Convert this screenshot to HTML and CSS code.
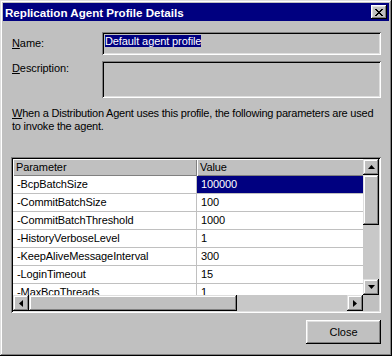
FILE: index.html
```html
<!DOCTYPE html>
<html lang="en">
  <head>
    <meta charset="UTF-8" />
    <title>Replication Agent Profile Details</title>
    <link rel="stylesheet" href="styles.css">
  </head>
  <body>
    <div class="window">
      <!-- Barra de titulo -->
      <div class="titlebar">
        <span class="title">Replication Agent Profile Details</span>
        <span class="title-close">
          <svg width="8" height="7" viewBox="0 0 8 7" shape-rendering="crispEdges">
            <path d="M0 0h2v1H0zM6 0h2v1H6zM1 1h2v1H1zM5 1h2v1H5zM2 2h4v1H2zM3 3h2v1H3zM2 4h4v1H2zM1 5h2v1H1zM5 5h2v1H5zM0 6h2v1H0zM6 6h2v1H6z" fill="#000"/>
          </svg>
        </span>
      </div>

      <div class="content">
        <div class="field">
          <label class="field-label"><u>N</u>ame:</label>
          <div class="textbox"><span class="selected">Default agent profile</span></div>
        </div>
        <div class="field field-desc">
          <label class="field-label"><u>D</u>escription:</label>
          <div class="textbox textbox-tall"></div>
        </div>

        <p class="info"><u>W</u>hen a Distribution Agent uses this profile, the following parameters are used to invoke the agent.</p>

        <!-- Lista de parametros -->
        <div class="listview">
          <div class="lv-area">
            <div class="lv-table">
              <div class="lv-row lv-head">
                <div class="cell cell-param">Parameter</div>
                <div class="cell cell-value">Value</div>
              </div>
              <div class="lv-row">
                <div class="cell cell-param">-BcpBatchSize</div>
                <div class="cell cell-value is-selected">100000</div>
              </div>
              <div class="lv-row">
                <div class="cell cell-param">-CommitBatchSize</div>
                <div class="cell cell-value">100</div>
              </div>
              <div class="lv-row">
                <div class="cell cell-param">-CommitBatchThreshold</div>
                <div class="cell cell-value">1000</div>
              </div>
              <div class="lv-row">
                <div class="cell cell-param">-HistoryVerboseLevel</div>
                <div class="cell cell-value">1</div>
              </div>
              <div class="lv-row">
                <div class="cell cell-param">-KeepAliveMessageInterval</div>
                <div class="cell cell-value">300</div>
              </div>
              <div class="lv-row">
                <div class="cell cell-param">-LoginTimeout</div>
                <div class="cell cell-value">15</div>
              </div>
              <div class="lv-row">
                <div class="cell cell-param">-MaxBcpThreads</div>
                <div class="cell cell-value">1</div>
              </div>
            </div>
          </div>

          <div class="vscroll">
            <div class="sb-btn">
              <svg width="7" height="4" viewBox="0 0 7 4"><polygon points="3.5,0 7,4 0,4" fill="#000"/></svg>
            </div>
            <div class="sb-thumb sb-thumb-v"></div>
            <div class="sb-track"></div>
            <div class="sb-btn">
              <svg width="7" height="4" viewBox="0 0 7 4"><polygon points="0,0 7,0 3.5,4" fill="#000"/></svg>
            </div>
          </div>

          <div class="hscroll">
            <div class="sb-btn">
              <svg width="4" height="7" viewBox="0 0 4 7"><polygon points="4,0 4,7 0,3.5" fill="#000"/></svg>
            </div>
            <div class="sb-thumb sb-thumb-h"></div>
            <div class="sb-track"></div>
            <div class="sb-btn">
              <svg width="4" height="7" viewBox="0 0 4 7"><polygon points="0,0 4,3.5 0,7" fill="#000"/></svg>
            </div>
          </div>
          <div class="sb-corner"></div>
        </div>

        <div class="buttons">
          <button class="btn">Close</button>
        </div>
      </div>
    </div>
  </body>
</html>
```

FILE: styles.css
```css
/* Dialogo estilo Windows clasico */
body {
  margin: 0;
  font-family: "Liberation Sans", Arial, sans-serif;
  font-size: 11px;
  letter-spacing: -0.1px;
  color: #000;
}
.window {
  width: 392px;
  height: 356px;
  box-sizing: border-box;
  padding: 3px;
  background: #c0c0c0;
  box-shadow: inset -1px -1px #000, inset 1px 1px #dfdfdf,
    inset -2px -2px #808080, inset 2px 2px #fff;
}
.titlebar {
  height: 18px;
  background: #000080;
  color: #fff;
  display: flex;
  align-items: center;
  justify-content: space-between;
  padding: 0 2px;
  font-weight: bold;
  font-size: 11.6px;
  letter-spacing: 0;
}
.title-close {
  width: 16px;
  height: 14px;
  box-sizing: border-box;
  background: #c0c0c0;
  display: flex;
  align-items: center;
  justify-content: center;
  box-shadow: inset -1px -1px #000, inset 1px 1px #fff,
    inset -2px -2px #808080, inset 2px 2px #dfdfdf;
}
.content {
  padding: 11px 8px 0 8px;
}
.field {
  display: flex;
  align-items: center;
}
.field-desc {
  margin-top: 6px;
  align-items: flex-start;
}
.field-desc .field-label {
  padding-top: 1px;
}
.field-label {
  width: 90px;
  line-height: 13px;
  padding-left: 1px;
}
.textbox {
  flex: 1;
  height: 23px;
  box-sizing: border-box;
  padding: 3px;
  line-height: 13px;
  background: #c0c0c0;
  box-shadow: inset 1px 1px #808080, inset -1px -1px #fff,
    inset 2px 2px #000, inset -2px -2px #dfdfdf;
}
.textbox-tall {
  height: 37px;
}
.selected {
  background: #000080;
  color: #fff;
}
.info {
  margin: 9px 0 0 1px;
  line-height: 13px;
  letter-spacing: -0.22px;
}
.listview {
  margin-top: 24px;
  height: 156px;
  box-sizing: border-box;
  padding: 2px;
  display: grid;
  grid-template-columns: 1fr 16px;
  grid-template-rows: 1fr 16px;
  box-shadow: inset 1px 1px #808080, inset -1px -1px #fff,
    inset 2px 2px #000, inset -2px -2px #dfdfdf;
}
.lv-area {
  background: #fff;
  overflow: hidden;
}
.lv-table {
  width: 535px;
}
.lv-row {
  display: flex;
  height: 18px;
  box-sizing: border-box;
  border-bottom: 1px solid #c0c0c0;
}
.cell {
  line-height: 17px;
  padding-left: 4px;
  box-sizing: border-box;
  white-space: nowrap;
}
.cell-param {
  width: 184px;
  border-right: 1px solid #c0c0c0;
}
.cell-value {
  flex: 1;
}
.is-selected {
  background: #000080;
  color: #fff;
}
.lv-head {
  height: 17px;
  border-bottom: none;
  background: #c0c0c0;
}
.lv-head .cell {
  line-height: 16px;
  padding-left: 3px;
  border-right: none;
  box-shadow: inset 1px 1px #fff, inset -1px -1px #808080;
}
.vscroll {
  display: flex;
  flex-direction: column;
}
.hscroll {
  display: flex;
}
.sb-btn {
  width: 16px;
  height: 16px;
  flex: none;
  box-sizing: border-box;
  display: flex;
  align-items: center;
  justify-content: center;
  background: #c0c0c0;
  box-shadow: inset -1px -1px #000, inset 1px 1px #dfdfdf,
    inset -2px -2px #808080, inset 2px 2px #fff;
}
.sb-thumb {
  flex: none;
  background: #c0c0c0;
  box-shadow: inset -1px -1px #000, inset 1px 1px #dfdfdf,
    inset -2px -2px #808080, inset 2px 2px #fff;
}
.sb-thumb-v {
  height: 50px;
}
.sb-thumb-h {
  width: 208px;
}
.sb-track {
  flex: 1;
  background: #c8c8c8;
}
.sb-corner {
  background: #c0c0c0;
}
.buttons {
  display: flex;
  justify-content: flex-end;
  margin-top: 7px;
}
.btn {
  width: 75px;
  height: 24px;
  border: none;
  background: #c0c0c0;
  font-family: "Liberation Sans", Arial, sans-serif;
  font-size: 11px;
  color: #000;
  box-shadow: inset -1px -1px #000, inset 1px 1px #fff,
    inset -2px -2px #808080, inset 2px 2px #dfdfdf;
}
```
